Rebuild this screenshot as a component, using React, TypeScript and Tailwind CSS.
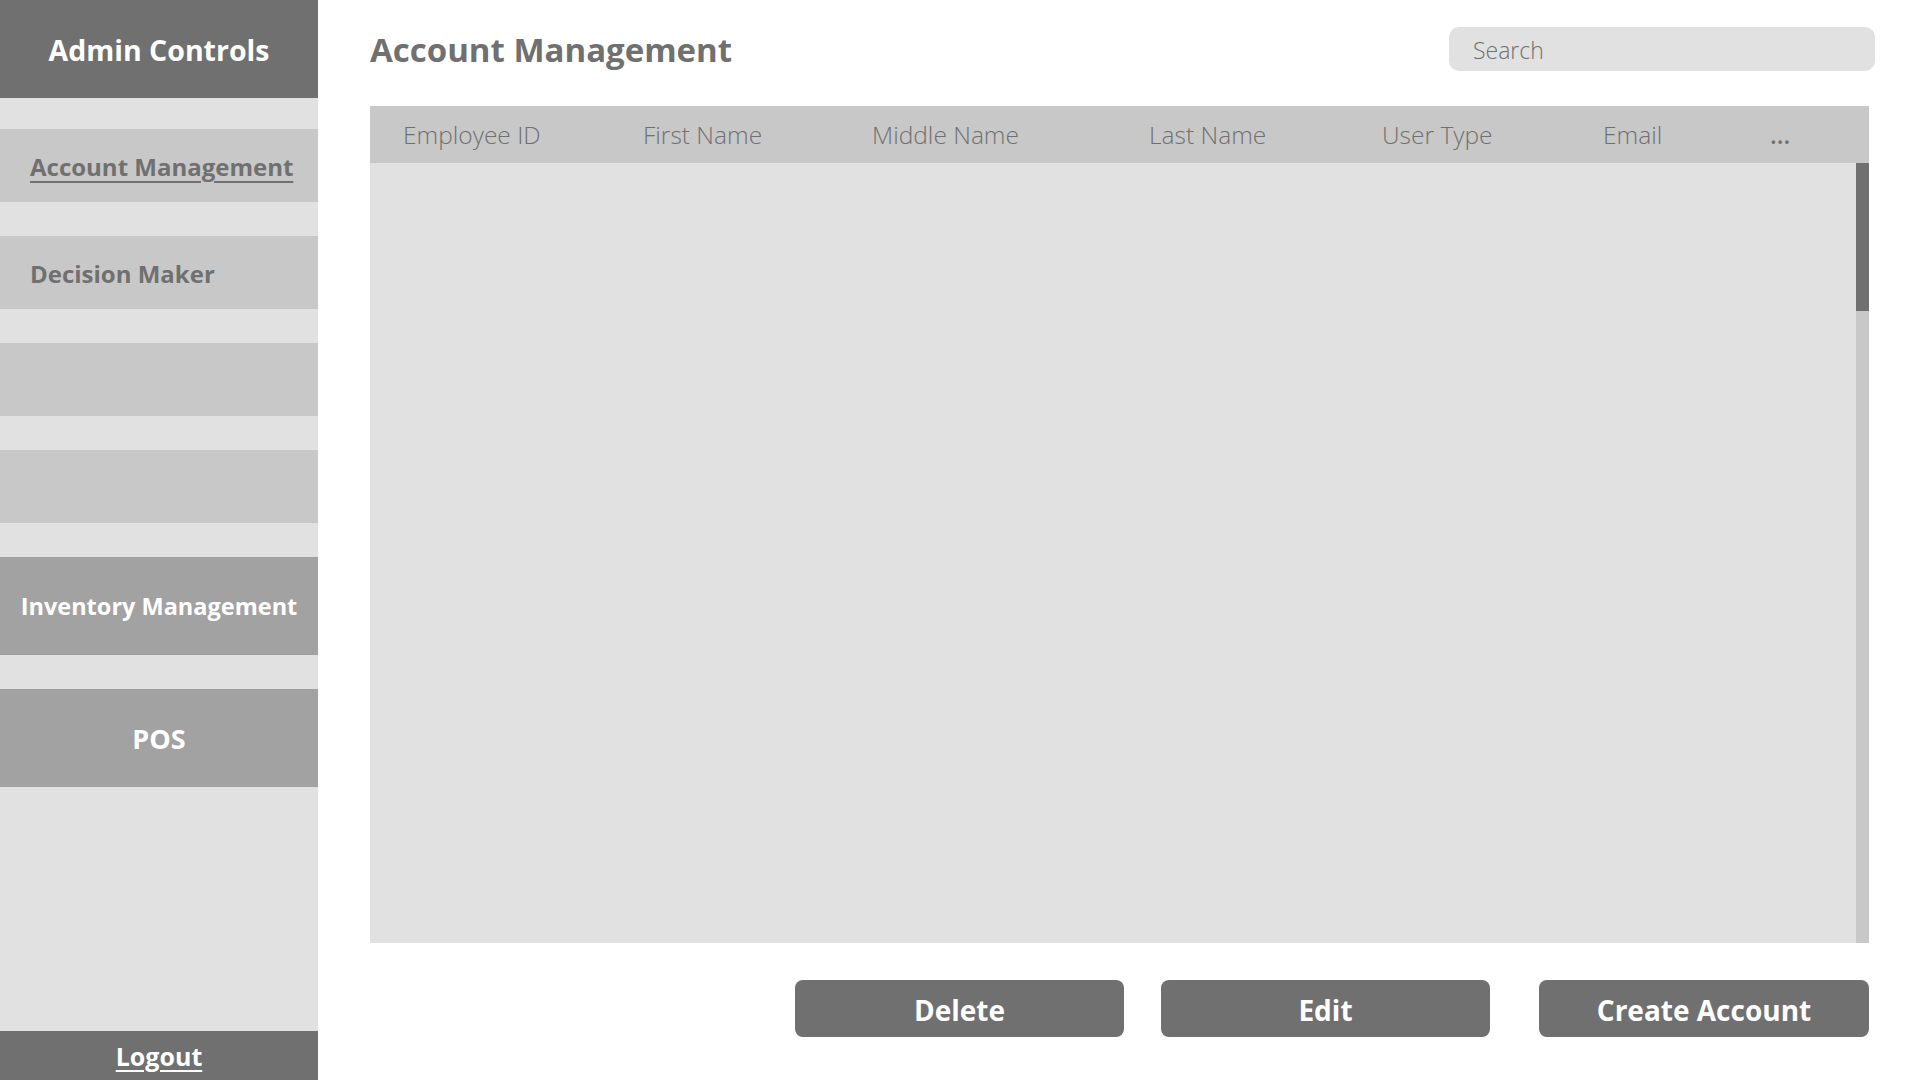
import React from 'react';

const columns = [
    { label: 'Employee ID', width: 'w-[240px]' },
    { label: 'First Name', width: 'w-[229px]' },
    { label: 'Middle Name', width: 'w-[277px]' },
    { label: 'Last Name', width: 'w-[233px]' },
    { label: 'User Type', width: 'w-[221px]' },
    { label: 'Email', width: 'w-[167px]' },
];

export default function App() {
    return (
        <div className="flex h-screen w-full bg-white font-['Open_Sans','Noto_Sans',sans-serif]">
            {/* sidebar */}
            <aside className="flex w-[318px] shrink-0 flex-col bg-[#e1e1e1]">
                <div className="flex h-[98px] items-center justify-center bg-[#707070] pt-[2px] text-[28.5px] font-bold text-white">
                    Admin Controls
                </div>

                <div className="mt-[31px] flex flex-col gap-[34px]">
                    <a
                        href="#"
                        className="flex h-[73px] items-center bg-[#c8c8c8] pl-[30px] pt-[2px] text-[24px] font-bold text-[#707070] underline underline-offset-[5px]"
                    >
                        Account Management
                    </a>
                    <div className="flex h-[73px] items-center bg-[#c8c8c8] pl-[30px] pt-[2px] text-[24px] font-bold text-[#707070]">
                        Decision Maker
                    </div>
                    <div className="h-[73px] bg-[#c8c8c8]" />
                    <div className="h-[73px] bg-[#c8c8c8]" />
                    <div className="flex h-[98px] items-center justify-center bg-[#a2a2a2] pt-[2px] text-[23.5px] font-bold text-white">
                        Inventory Management
                    </div>
                    <div className="flex h-[98px] items-center justify-center bg-[#a2a2a2] pt-[2px] text-[27px] font-bold text-white">
                        POS
                    </div>
                </div>

                <div className="flex-1" />

                <a
                    href="#"
                    className="flex h-[49px] items-center justify-center bg-[#707070] pt-[2px] text-[25px] font-bold text-white underline underline-offset-[4px]"
                >
                    Logout
                </a>
            </aside>

            {/* main */}
            <main className="flex flex-1 flex-col pl-[52px] pr-[51px] pt-[27px] pb-[43px]">
                <div className="flex h-[44px] items-center justify-between">
                    <h1 className="pt-[2px] text-[33px] font-bold text-[#707070]">Account Management</h1>
                    <div className="mr-[-6px] flex h-[44px] w-[426px] items-center rounded-[10px] bg-[#e1e1e1] pl-[24px] pt-[2px] text-[23px] font-light text-[#707070]">
                        Search
                    </div>
                </div>

                <div className="mt-[35px] flex flex-1 flex-col">
                    <div className="flex h-[57px] items-center bg-[#c8c8c8] pl-[33px] pt-[2px] text-[24.5px] font-light text-[#707070]">
                        {columns.map((c) => (
                            <span key={c.label} className={c.width}>
                                {c.label}
                            </span>
                        ))}
                        <span className="font-semibold">...</span>
                    </div>
                    <div className="flex flex-1">
                        <div className="flex-1 bg-[#e1e1e1]" />
                        <div className="w-[13px] bg-[#c8c8c8]">
                            <div className="h-[148px] bg-[#707070]" />
                        </div>
                    </div>
                </div>

                <div className="mt-[37px] flex h-[57px] justify-end">
                    <button className="w-[329px] rounded-[8px] bg-[#707070] pt-[2px] text-[28px] font-bold text-white">
                        Delete
                    </button>
                    <button className="ml-[37px] w-[329px] rounded-[8px] bg-[#707070] pt-[2px] text-[28px] font-bold text-white">
                        Edit
                    </button>
                    <button className="ml-[49px] w-[330px] rounded-[8px] bg-[#707070] pt-[2px] text-[28px] font-bold text-white">
                        Create Account
                    </button>
                </div>
            </main>
        </div>
    );
}
